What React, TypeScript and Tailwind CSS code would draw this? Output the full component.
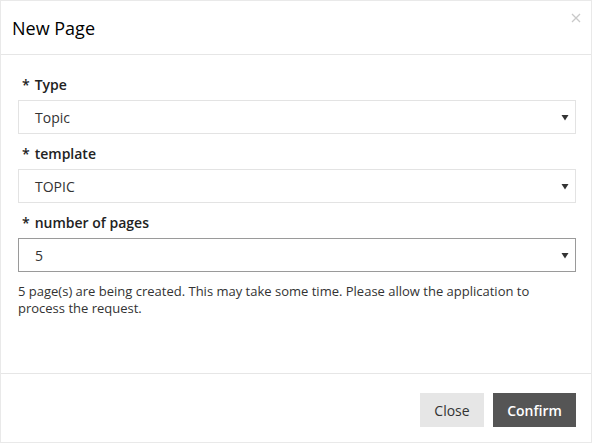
import React from "react";

function Field({ label, value, active }: { label: string; value: string; active?: boolean }) {
  return (
    <div className="flex flex-col">
      <div className="h-[20px] flex items-center pl-[4px] text-[14px] font-semibold text-[#222] leading-[20px]">
        <span className="mr-[5px]">*</span>
        <span>{label}</span>
      </div>
      <div
        className={`mt-[5px] h-[34px] flex items-center justify-between pl-[16px] pr-[6px] border bg-white text-[14px] text-[#333] ${
          active ? "border-[#9a9a9a]" : "border-[#e3e3e3]"
        }`}
      >
        <span>{value}</span>
        <svg width="8" height="7" viewBox="0 0 8 7">
          <path d="M0.5 1 H7.5 L4 6.5 Z" fill="#333" />
        </svg>
      </div>
    </div>
  );
}

export default function App() {
  return (
    <div
      className="w-[592px] h-[443px] bg-white border border-[#e9e9e9] flex flex-col"
      style={{ fontFamily: '"Open Sans", "Noto Sans", sans-serif' }}
    >
      <div className="h-[54px] border-b border-[#e6e6e6] flex items-center justify-between pl-[11px] pr-[10px] shrink-0">
        <div className="text-[18px] text-black leading-[24px] mt-[1px]">New Page</div>
        <svg width="10" height="10" viewBox="0 0 10 10" className="self-start mt-[12px]">
          <path d="M1 1 L9 9 M9 1 L1 9" stroke="#c9c9c9" strokeWidth="1.3" />
        </svg>
      </div>
      <div className="flex-1 pl-[17px] pr-[15px] pt-[20px] flex flex-col">
        <div className="flex flex-col gap-[10px]">
          <Field label="Type" value="Topic" />
          <Field label="template" value="TOPIC" />
          <Field label="number of pages" value="5" active />
        </div>
        <p className="mt-[11px] text-[13px] leading-[17px] text-[#333]">
          5 page(s) are being created. This may take some time. Please allow the application to process the request.
        </p>
      </div>
      <div className="h-[69px] border-t border-[#e6e6e6] flex items-start justify-end gap-[9px] pt-[19px] pr-[15px] shrink-0">
        <button className="h-[34px] w-[64px] bg-[#e6e6e6] text-[#333] text-[14px]">Close</button>
        <button className="h-[34px] w-[83px] bg-[#555555] text-white text-[14px] font-semibold">Confirm</button>
      </div>
    </div>
  );
}
